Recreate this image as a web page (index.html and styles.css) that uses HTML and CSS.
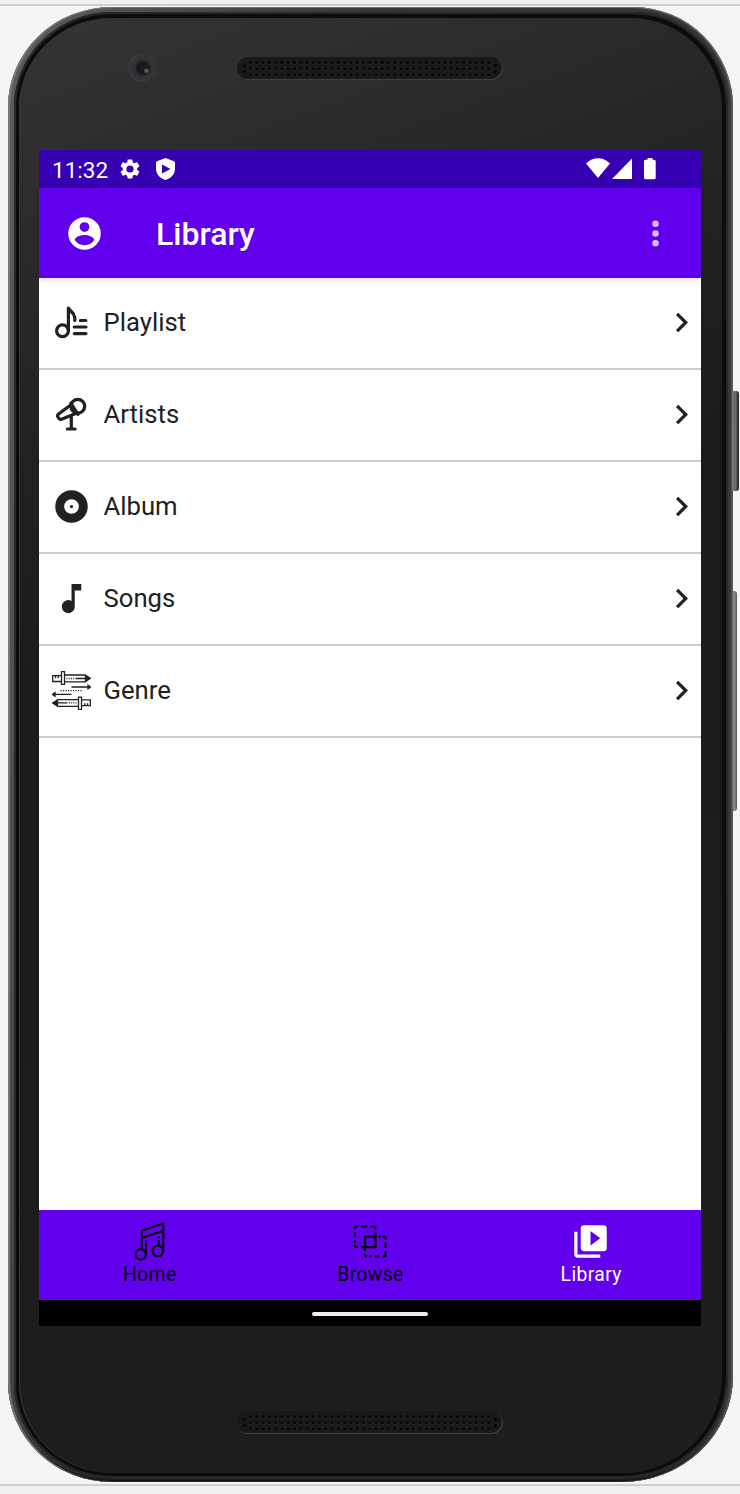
FILE: index.html
```html
<!DOCTYPE html>
<html lang="en">
<head>
<meta charset="utf-8">
<title>Library</title>
<link rel="stylesheet" href="styles.css">
</head>
<body>
<svg class="defs" width="0" height="0" aria-hidden="true">
  <defs>
    <pattern id="holes" x="10.6" y="2.4" width="6.27" height="6.2" patternUnits="userSpaceOnUse">
      <circle cx="3.3" cy="3.3" r="1.9" fill="#2b2b2b"/>
      <circle cx="3.1" cy="3.1" r="1.6" fill="#050505"/>
    </pattern>
    <symbol id="grille" viewBox="0 0 266 23">
      <rect x="10.6" y="2.4" width="244.5" height="18.6" fill="url(#holes)"/>
      <g fill="#050505"><circle cx="7.3" cy="8.5" r="1.6"/><circle cx="7.3" cy="14.5" r="1.6"/><circle cx="258.5" cy="8.5" r="1.6"/><circle cx="258.5" cy="14.5" r="1.6"/></g>
    </symbol>
    <symbol id="chevron" viewBox="0 0 24 24"><path d="M8.6 16.6 13.2 12 8.6 7.4 10 6l6 6-6 6z"/></symbol>
  </defs>
</svg>
<div class="stage">
  <div class="phone">
    <i class="key power"></i>
    <i class="key volume"></i>
    <div class="ring">
      <div class="face">
        <div class="forehead">
          <span class="camera"></span>
          <svg class="speaker"><use href="#grille"/></svg>
        </div>
        <div class="screen">
          <div class="status">
            <span class="clock">11:32</span>
            <svg class="gear" viewBox="0 0 24 24"><path d="M19.14 12.94c.04-.3.06-.61.06-.94s-.02-.64-.07-.94l2.03-1.58c.18-.14.23-.41.12-.61l-1.92-3.32c-.12-.22-.37-.29-.59-.22l-2.39.96c-.5-.38-1.03-.7-1.62-.94l-.36-2.54c-.04-.24-.24-.41-.48-.41h-3.84c-.24 0-.43.17-.47.41l-.36 2.54c-.59.24-1.13.57-1.62.94l-2.39-.96c-.22-.08-.47 0-.59.22L2.74 8.87c-.12.21-.08.47.12.61l2.03 1.58c-.05.3-.09.63-.09.94s.02.64.07.94l-2.03 1.58c-.18.14-.23.41-.12.61l1.92 3.32c.12.22.37.29.59.22l2.39-.96c.5.38 1.03.7 1.62.94l.36 2.54c.05.24.24.41.48.41h3.84c.24 0 .44-.17.47-.41l.36-2.54c.59-.24 1.13-.56 1.62-.94l2.39.96c.22.08.47 0 .59-.22l1.92-3.32c.12-.22.07-.47-.12-.61zM12 15.6A3.6 3.6 0 1 1 12 8.4a3.6 3.6 0 0 1 0 7.2"/></svg>
            <svg class="shield" viewBox="0 0 19 22"><path fill-rule="evenodd" d="M9.5 0 18 3.2q1 .4 1 1.5V11c0 5-4 9.500-9.500 11C4 20.500 0 16 0 11V4.700q0-1.100 1-1.500zM6 6.600v9l8.500-4.500z"/></svg>
            <span class="spacer"></span>
            <svg class="signals" viewBox="0 0 72 22"><path d="M0 5.500C7-1.500 17-1.500 24 5.500L12 20zM46 .5V21H26zM61.500 1.800V.9q0-.9.900-.9h3.200q.9 0 .9.900v.9h1.700q1.500 0 1.500 1.500v16.500q0 1.500-1.500 1.500h-8.700q-1.500 0-1.500-1.500V3.300q0-1.500 1.500-1.500z"/></svg>
          </div>
          <header class="appbar">
            <svg class="icon account" viewBox="0 0 24 24"><path d="M12 2a10 10 0 1 0 0 20 10 10 0 0 0 0-20m0 3a3 3 0 1 1 0 6 3 3 0 0 1 0-6m0 14.200A7.200 7.200 0 0 1 6 16c.03-2 4-3.100 6-3.100s5.970 1.100 6 3.100a7.200 7.200 0 0 1-6 3.200"/></svg>
            <h1>Library</h1>
            <svg class="icon more" viewBox="0 0 24 24"><circle cx="12" cy="6" r="2"/><circle cx="12" cy="12" r="2"/><circle cx="12" cy="18" r="2"/></svg>
          </header>
          <main class="list">
            <div class="row">
              <svg class="icon line" viewBox="0 0 39 39"><circle cx="10.500" cy="27.800" r="5.900"/><path d="M16.400 27.800V5c1 2.500 7.500 5 6.400 12.500M17 6.500l4.500 4.500M28.300 17.500h5.500M22.300 24H34M22.300 30.600H34"/></svg>
              <span>Playlist</span><svg class="chev"><use href="#chevron"/></svg>
            </div>
            <div class="row">
              <svg class="icon line" viewBox="0 0 39 39"><circle cx="25.800" cy="11.300" r="6.900"/><path d="M18.800 8.200 26 19.300M19.300 9.500 6.600 19q-1.800 1.500-.5 3.300l1.100 1.400q1.200 1.400 3 .3L25.500 17.800M19.300 21V33.500M15.300 34h7.800"/></svg>
              <span>Artists</span><svg class="chev"><use href="#chevron"/></svg>
            </div>
            <div class="row">
              <svg class="icon" viewBox="0 0 24 24"><path fill-rule="evenodd" d="M12 2a10 10 0 1 0 0 20 10 10 0 0 0 0-20m0 5.500a4.500 4.500 0 1 1 0 9 4.500 4.500 0 0 1 0-9"/><circle cx="12" cy="12" r="1"/></svg>
              <span>Album</span><svg class="chev"><use href="#chevron"/></svg>
            </div>
            <div class="row">
              <svg class="icon" viewBox="0 0 24 24"><path d="M12 3v10.550A4 4 0 1 0 14 17V7h4V3z"/></svg>
              <span>Songs</span><svg class="chev"><use href="#chevron"/></svg>
            </div>
            <div class="row">
              <svg class="icon swords" viewBox="0 0 39 39">
                <g id="sword"><path d="M.7 4.700h8.800v5.800H.7zM9.500.7h3v12.600h-3zM12.500 4h20.500l5 3.400-5 3.400H12.500M3.500 5v2.200M6.200 5v2.200"/><path d="M14.500 7.500h8" stroke-dasharray="1 1.200"/><path d="M23.500 7.500H33M19.500 16h18"/><path d="m36 14.200 2.600 1.800-2.600 1.800zM33.500 4.500l4.500 2.900-4.500 2.900z" fill="#212121"/></g>
                <use href="#sword" transform="rotate(180 19.500 19.700)"/>
                <path d="M8.500 19.700h22" stroke-dasharray="1.200 1.300"/>
              </svg>
              <span>Genre</span><svg class="chev"><use href="#chevron"/></svg>
            </div>
          </main>
          <nav class="tabs">
            <div class="tab">
              <svg class="icon notes" viewBox="0 0 39 39"><circle cx="10.700" cy="32.500" r="5.200"/><circle cx="27.800" cy="29" r="5.300"/><path d="M11.800 27.300V8.700L33.300 1.400V29M11.800 16l21.500-7.300M16 32V21.300M28.600 23.700V18"/><path d="M16 19.200v-.1M28.600 15.600v-.1" stroke-linecap="round"/></svg>
              <span>Home</span>
            </div>
            <div class="tab">
              <svg class="icon overlap" viewBox="0 0 39 39"><path d="M14 14.700h10.500v10.500H14z"/><path d="M3.900 7.500V5.700q0-1.200 1.200-1.200h1.700M10.200 4.500h6M19.500 4.500h3.300q1.400 0 1.400 1.400v1.600M24.300 10.500v4M3.900 10.500v4.500M3.900 18v3M3.900 22.500v1.500q0 1.200 1.200 1.200h2M10 25.200h4M27.500 14.700h2M31.500 14.700h1.800q1.200 0 1.200 1.200v1.500M34.500 20.500v5.500M34.500 29v4q0 1.400-1.200 1.400h-1.500M28.500 34.400h-5M20.500 34.400h-2.500M16 34.400h-.8q-1.200 0-1.200-1.200v-1.500M14 29v-3"/></svg>
              <span>Browse</span>
            </div>
            <div class="tab active">
              <svg class="icon" viewBox="0 0 24 24"><path d="M4 6H2v14c0 1.100.9 2 2 2h14v-2H4zM20 2H8a2 2 0 0 0-2 2v12c0 1.100.9 2 2 2h12a2 2 0 0 0 2-2V4a2 2 0 0 0-2-2m-8 12.500v-9l6 4.500z"/></svg>
              <span>Library</span>
            </div>
          </nav>
          <div class="system"><i class="handle"></i></div>
        </div>
        <div class="chin"><svg class="speaker"><use href="#grille"/></svg></div>
      </div>
    </div>
  </div>
</div>
</body>
</html>
```
FILE: styles.css
```css
* { box-sizing: border-box; }
body { margin: 0; background: #f0f0f0; font-family: Roboto, "Liberation Sans", sans-serif; color: #212121; }
svg { display: block; flex: none; }
.defs { position: absolute; }
.stage { height: 1494px; padding: 1px 7px 0 8px; border-top: 4px solid #f0f0f0; background: linear-gradient(#cfcfcf 0 2px, #f5f5f5 2px 1480px, #cfcfcf 1480px 1482px, #f0f0f0 1482px); overflow: hidden; }
.phone { position: relative; height: 1475px; margin-top: 2px; padding: 5px 5px 4px 6px; border-radius: 104px 100px 112px 104px / 100px 100px 106px 100px; background: linear-gradient(100deg, #6e6e6e 0, #5c5a5a 2%, #343233 40%, #3a3838 100%); box-shadow: inset 0 1px 1px #777, inset 2px 0 1px #7a7a7a, inset -2px 0 1px #555, inset 0 -3px 2px #151515; }
.key { position: absolute; background: linear-gradient(90deg, #777, #666 60%, #333 75%); border-radius: 0 3px 3px 0; }
.power { left: 724px; top: 384px; width: 7px; height: 100px; }
.volume { left: 724px; top: 584px; width: 5px; height: 220px; background: linear-gradient(90deg, #666, #8d8d8a 50%, #555); }
.ring { height: 100%; padding: 6px 6px 5px 5px; border-radius: 98px 96px 106px 98px / 95px 95px 102px 95px; background: #0c0c0c; box-shadow: inset 0 0 0 2px #292828; }
.face { height: 100%; padding: 0 20px; display: flex; flex-direction: column; border-radius: 93px 92px 100px 93px / 90px 90px 97px 90px; background: linear-gradient(160deg, #343436 0, #2d2d2d 10%, #222 25%, #1b1b1b 40%, #1e1e1e 100%); box-shadow: inset 1px 0 1px #383838; }
.forehead { height: 132px; flex: none; display: flex; padding: 34px 0 0 89px; }
.camera { width: 28px; height: 28px; margin: 2px 81px 0 0; border-radius: 50%; background: radial-gradient(circle at 66% 60%, #795158 0 1px, transparent 3px), radial-gradient(circle at 54% 50%, #19191f 0 6px, #303032 8px, #353537 12px, #3b3b3d 14px); }
.speaker { width: 266px; height: 23px; margin-top: 5px; border-radius: 12px; background: #191919; box-shadow: inset -1px -1px 1px #444; }
.screen { width: 662px; height: 1176px; flex: none; display: flex; flex-direction: column; background: #fff; }
.status { height: 38px; flex: none; display: flex; align-items: center; padding: 0 43px 0 13px; background: #3700b3; color: #fff; fill: #fff; }
.clock { width: 57px; margin-right: 9px; padding-top: 2px; font-size: 22.5px; line-height: 36px; }
.gear { width: 24px; height: 24px; margin-top: -1px; }
.shield { width: 19px; height: 22px; margin: -1px 0 0 14px; }
.spacer { flex: 1; }
.signals { width: 72px; height: 22px; margin-top: -1px; }
.appbar { position: relative; height: 90px; flex: none; display: flex; align-items: center; padding: 0 26px; background: #6200ee; color: #fff; fill: #fff; box-shadow: 0 2px 6px #0002; }
.icon { width: 39px; height: 39px; }
.appbar h1 { flex: 1; margin: 0 0 0 52px; padding-top: 2px; font-size: 32px; font-weight: 500; line-height: 40px; }
.more { opacity: .75; }
.list { flex: 1; }
.row { height: 92px; display: flex; align-items: center; padding: 0 0 2px 13px; border-bottom: 2px solid #cbcbcb; fill: #212121; font-size: 25.7px; }
.row > span { flex: 1; margin-left: 12.5px; line-height: 36px; }
.chev { width: 39px; height: 39px; }
.line { fill: none; stroke: #212121; stroke-width: 3.2; stroke-linecap: round; stroke-linejoin: round; }
.swords { fill: none; stroke: #212121; stroke-width: 1.3; }
.tabs { height: 90px; flex: none; display: flex; background: #6200ee; color: #000; }
.tab { flex: 1; display: flex; flex-direction: column; align-items: center; padding-top: 12px; font-size: 19.3px; line-height: 24px; letter-spacing: .4px; }
.tab span { padding: 2px 0 0 1px; }
.tab.active { color: #fff; fill: #fff; }
.notes, .overlap { fill: none; stroke: #000; stroke-width: 2; stroke-linejoin: round; }
.overlap { stroke-width: 2.2; }
.system { height: 26px; flex: none; display: flex; justify-content: center; padding-top: 12px; background: #000; }
.handle { width: 116px; height: 4px; border-radius: 2px; background: #eee; }
.chin { padding: 80px 0 0 198px; }
```
